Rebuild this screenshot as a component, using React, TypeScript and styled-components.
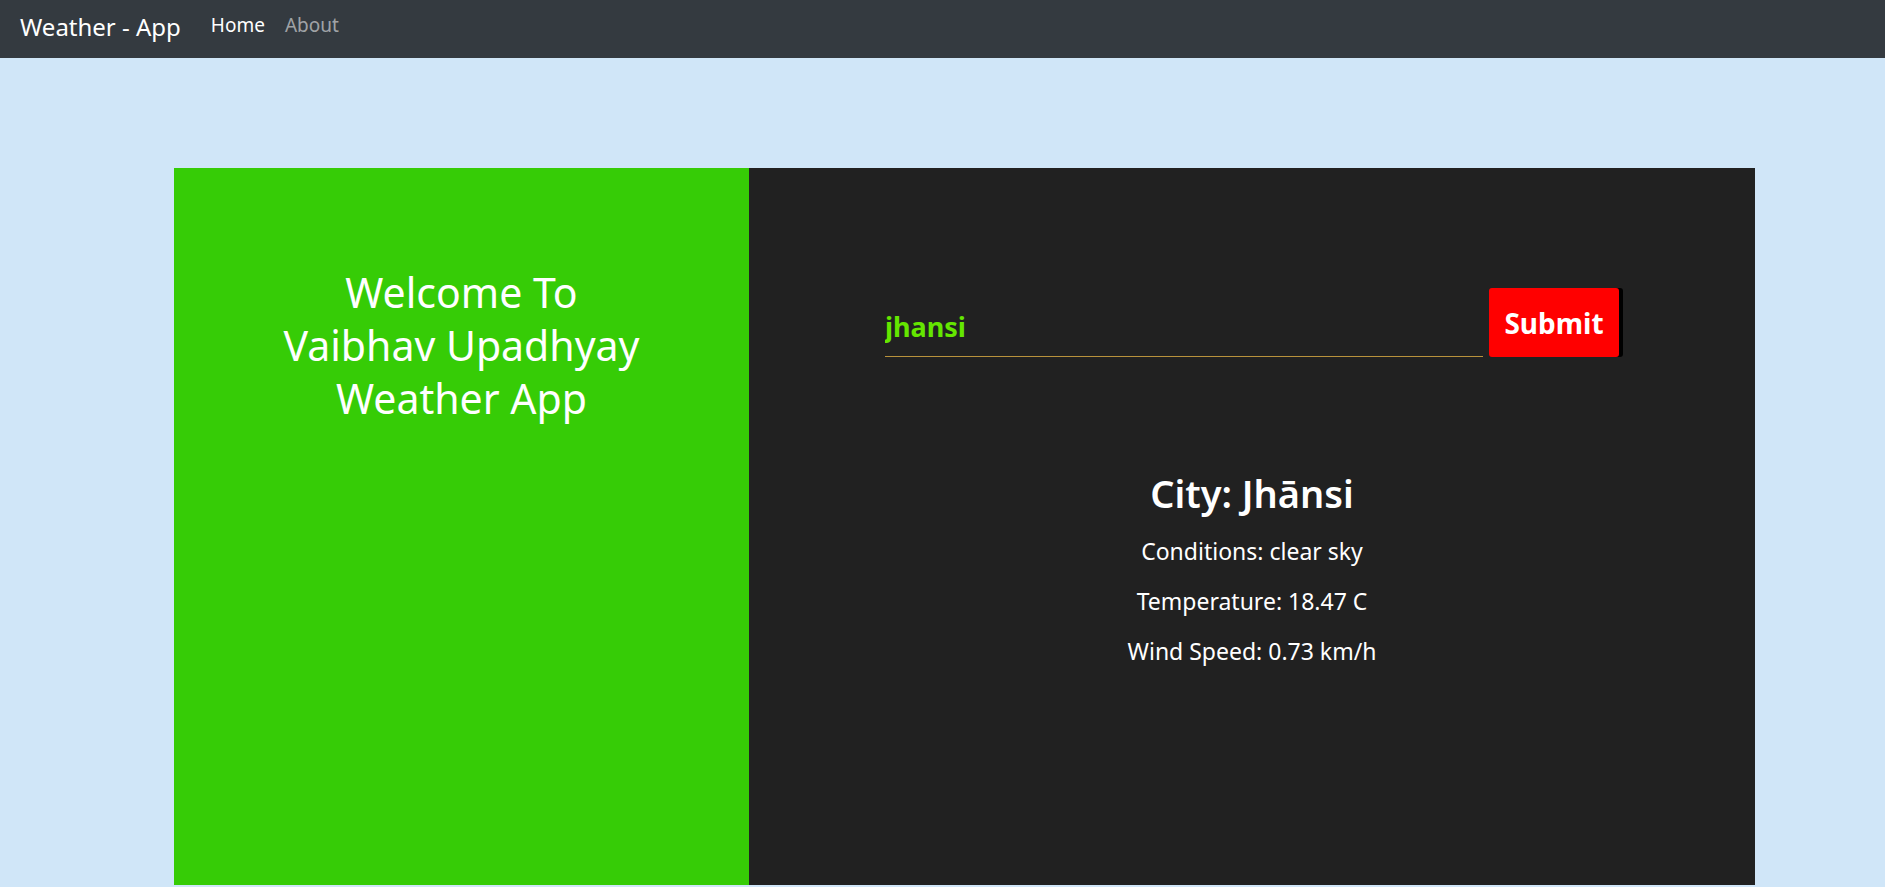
import styled, { createGlobalStyle } from "styled-components";

const GlobalStyle = createGlobalStyle`
  * {
    box-sizing: border-box;
  }
  body {
    margin: 0;
    background: #d0e6f8;
    font-family: "Noto Sans", "Open Sans", sans-serif;
  }
`;

const NavBar = styled.nav`
  height: 58px;
  background: #343a40;
  display: flex;
  align-items: center;
  padding: 0 20px 6px;
`;

const Brand = styled.a`
  color: #fff;
  font-size: 24px;
  text-decoration: none;
  margin-right: 30px;
`;

const NavLink = styled.a<{ $active?: boolean }>`
  color: ${(p) => (p.$active ? "#fff" : "rgba(255, 255, 255, 0.55)")};
  font-size: 19px;
  text-decoration: none;
  margin-right: 20px;
  margin-top: -2px;
`;

const Card = styled.div`
  width: 1581px;
  height: 717px;
  margin: 110px 0 0 174px;
  display: flex;
`;

const WelcomePanel = styled.div`
  width: 575px;
  background: #36cc06;
  padding-top: 98px;
  text-align: center;
`;

const WelcomeTitle = styled.h1`
  margin: 0;
  color: #fff;
  font-family: "Comic Sans MS", "Noto Sans", sans-serif;
  font-weight: 400;
  font-size: 41px;
  line-height: 53px;
`;

const WeatherPanel = styled.div`
  flex: 1;
  background: #212121;
  padding-top: 120px;
  display: flex;
  flex-direction: column;
  align-items: center;
`;

const SearchForm = styled.form`
  width: 734px;
  display: flex;
  align-items: flex-end;
  gap: 6px;
`;

const CityInput = styled.input`
  flex: 1;
  height: 69px;
  background: transparent;
  border: none;
  border-bottom: 1px solid #b8923c;
  outline: none;
  color: #64e600;
  font-family: "Noto Sans", sans-serif;
  font-weight: 700;
  font-size: 27px;
  padding: 8px 0 0 0;
`;

const SubmitButton = styled.button`
  width: 130px;
  height: 69px;
  background: #ff0000;
  color: #fff;
  border: none;
  border-radius: 3px;
  box-shadow: 4px 0 0 #000;
  font-family: "Noto Sans", sans-serif;
  font-weight: 700;
  font-size: 28px;
  cursor: pointer;
`;

const Result = styled.div`
  margin-top: 112px;
  text-align: center;
  color: #fff;
`;

const CityName = styled.h2`
  margin: 0 0 16px;
  font-weight: 600;
  font-size: 38px;
  line-height: 48px;
`;

const Detail = styled.p`
  margin: 0 0 13px;
  font-size: 23px;
  line-height: 37px;
`;

export default function App() {
  return (
    <>
      <GlobalStyle />
      <NavBar>
        <Brand href="#">Weather - App</Brand>
        <NavLink href="#" $active>
          Home
        </NavLink>
        <NavLink href="#">About</NavLink>
      </NavBar>
      <Card>
        <WelcomePanel>
          <WelcomeTitle>
            Welcome To
            <br />
            Vaibhav Upadhyay
            <br />
            Weather App
          </WelcomeTitle>
        </WelcomePanel>
        <WeatherPanel>
          <SearchForm onSubmit={(e) => e.preventDefault()}>
            <CityInput type="text" defaultValue="jhansi" />
            <SubmitButton type="submit">Submit</SubmitButton>
          </SearchForm>
          <Result>
            <CityName>City: Jhānsi</CityName>
            <Detail>Conditions: clear sky</Detail>
            <Detail>Temperature: 18.47 C</Detail>
            <Detail>Wind Speed: 0.73 km/h</Detail>
          </Result>
        </WeatherPanel>
      </Card>
    </>
  );
}
